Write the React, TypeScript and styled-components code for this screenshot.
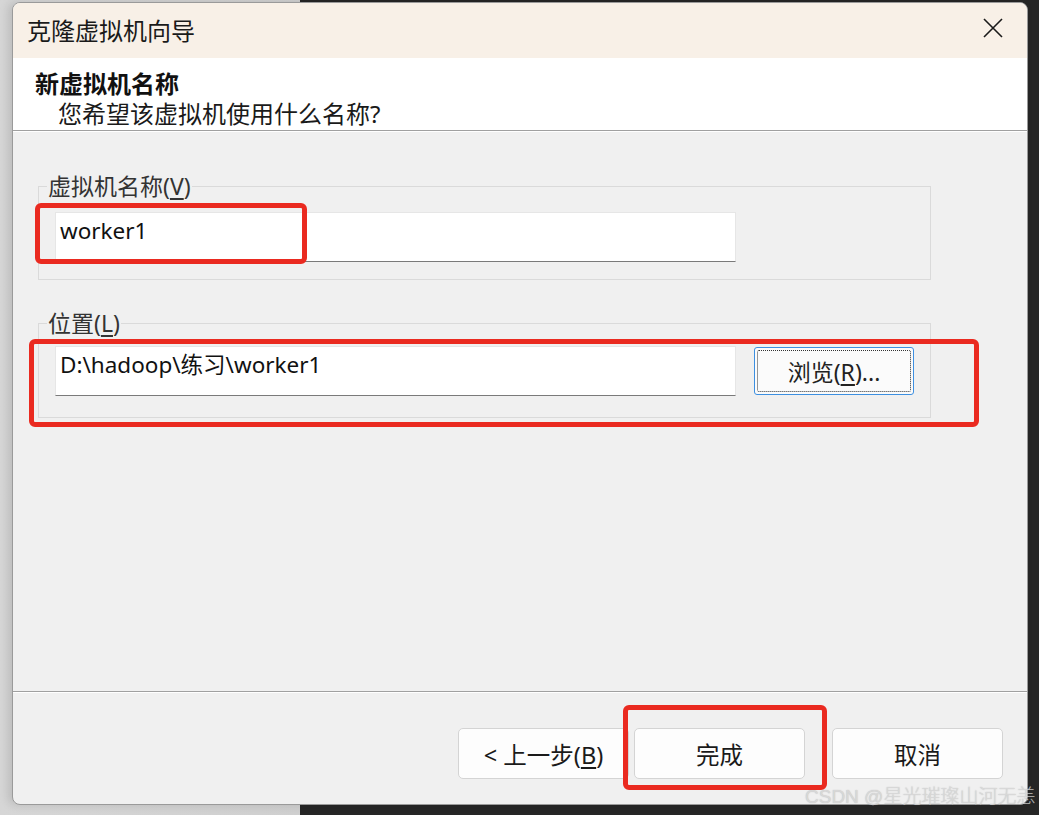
import React from "react";
import styled, { createGlobalStyle } from "styled-components";

const GlobalStyle = createGlobalStyle`
  html, body {
    margin: 0;
    padding: 0;
  }
  body {
    font-family: "Noto Sans", "Noto Sans CJK SC", sans-serif;
    color: #1a1a1a;
  }
`;

const Screen = styled.div`
  position: relative;
  width: 1039px;
  height: 815px;
  box-sizing: border-box;
  padding: 2px 0 0 12px;
  overflow: hidden;
  background: linear-gradient(to right, #d6d6d6 0, #cfcfcf 300px, #262626 300px);
`;

const Window = styled.div`
  width: 1016px;
  height: 803px;
  box-sizing: border-box;
  border: 1px solid #9a9a9a;
  border-radius: 8px;
  overflow: hidden;
  display: flex;
  flex-direction: column;
  background: #f0f0f0;
  box-shadow: -4px 0 10px rgba(0, 0, 0, 0.12);
`;

const TitleBar = styled.div`
  height: 55px;
  flex-shrink: 0;
  display: flex;
  align-items: center;
  justify-content: space-between;
  padding: 0 22px 2px 14px;
  box-sizing: border-box;
  background: #f8f0e7;
`;

const Title = styled.span`
  font-size: 24px;
  color: #1a1a1a;
`;

const CloseButton = styled.button`
  width: 24px;
  height: 24px;
  padding: 0;
  border: none;
  background: transparent;
  display: flex;
  align-items: center;
  justify-content: center;
  margin-top: -3px;
`;

const Header = styled.div`
  height: 73px;
  flex-shrink: 0;
  box-sizing: border-box;
  background: #fff;
  border-bottom: 1px solid #a0a0a0;
  padding: 11px 0 0 22px;
`;

const HeaderTitle = styled.div`
  font-size: 24px;
  line-height: 30px;
  font-weight: 700;
  color: #111;
`;

const HeaderSub = styled.div`
  font-size: 24px;
  line-height: 30px;
  padding-left: 23px;
  color: #1a1a1a;
`;

const Body = styled.div`
  flex: 1;
  border-top: 1px solid #fff;
  padding: 40px 96px 0 25px;
`;

const Group = styled.fieldset<{ $top?: number; $padTop: number; $padBottom: number }>`
  margin: ${(p) => p.$top ?? 0}px 0 0 0;
  padding: ${(p) => p.$padTop}px 0 ${(p) => p.$padBottom}px 8px;
  border: 1px solid #dadada;
  min-width: 0;
`;

const Legend = styled.legend`
  padding: 0 1px;
  font-size: 23px;
  line-height: 28px;
  color: #333;
`;

const Mnemonic = styled.u`
  text-decoration: underline;
  text-underline-offset: 3px;
`;

const FieldRow = styled.div`
  display: flex;
  align-items: center;
  gap: 18px;
  margin-left: 8px;
`;

const TextBox = styled.div`
  width: 681px;
  height: 50px;
  box-sizing: border-box;
  background: #fff;
  border: 1px solid #e6e6e6;
  border-bottom: 1px solid #7a7a7a;
  padding: 3px 0 0 4px;
  font-size: 22.5px;
  line-height: 30px;
  color: #111;
`;

const BrowseButton = styled.button`
  position: relative;
  width: 160px;
  height: 48px;
  box-sizing: border-box;
  border: 1px solid #3d8fe0;
  border-radius: 3px;
  background: #fbfbfb;
  font-family: "Noto Sans", "Noto Sans CJK SC", sans-serif;
  font-size: 23px;
  color: #222;
  padding: 0;

  &::after {
    content: "";
    position: absolute;
    inset: 2px;
    border: 1px dotted #333;
    border-radius: 2px;
  }
`;

const Footer = styled.div`
  height: 113px;
  flex-shrink: 0;
  box-sizing: border-box;
  border-top: 1px solid #a0a0a0;
  box-shadow: inset 0 1px 0 #fff;
  display: flex;
  justify-content: flex-end;
  align-items: flex-start;
  padding: 36px 24px 0 0;
`;

const WizardButton = styled.button<{ $gap?: number }>`
  width: 171px;
  height: 51px;
  margin-left: ${(p) => p.$gap ?? 0}px;
  box-sizing: border-box;
  border: 1px solid #d4d4d4;
  border-radius: 5px;
  background: #fdfdfd;
  font-family: "Noto Sans", "Noto Sans CJK SC", sans-serif;
  font-size: 23.5px;
  color: #1a1a1a;
  padding: 0;
`;

const Highlight = styled.div<{ $x: number; $y: number; $w: number; $h: number }>`
  position: absolute;
  left: ${(p) => p.$x}px;
  top: ${(p) => p.$y}px;
  width: ${(p) => p.$w}px;
  height: ${(p) => p.$h}px;
  box-sizing: border-box;
  border: 5px solid #ea2a20;
  border-radius: 6px;
  pointer-events: none;
`;

const Watermark = styled.div`
  position: absolute;
  left: 805px;
  top: 785px;
  font-family: "Liberation Sans", "Noto Sans CJK SC", sans-serif;
  font-size: 19px;
  font-weight: 300;
  line-height: 24px;
  color: rgba(225, 225, 225, 0.75);
  text-shadow: 0 0 1px rgba(120, 120, 120, 0.5);
  white-space: nowrap;
`;

export default function App() {
  return (
    <>
      <GlobalStyle />
      <Screen>
        <Window>
          <TitleBar>
            <Title>克隆虚拟机向导</Title>
            <CloseButton aria-label="关闭">
              <svg width="20" height="20" viewBox="0 0 20 20">
                <path d="M1 1 L19 19 M19 1 L1 19" stroke="#1a1a1a" strokeWidth="1.6" fill="none" />
              </svg>
            </CloseButton>
          </TitleBar>
          <Header>
            <HeaderTitle>新虚拟机名称</HeaderTitle>
            <HeaderSub>您希望该虚拟机使用什么名称?</HeaderSub>
          </Header>
          <Body>
            <Group $padTop={12} $padBottom={17}>
              <Legend>
                虚拟机名称(<Mnemonic>V</Mnemonic>)
              </Legend>
              <FieldRow>
                <TextBox>worker1</TextBox>
              </FieldRow>
            </Group>
            <Group $top={29} $padTop={9} $padBottom={21}>
              <Legend>
                位置(<Mnemonic>L</Mnemonic>)
              </Legend>
              <FieldRow>
                <TextBox>D:\hadoop\练习\worker1</TextBox>
                <BrowseButton>
                  浏览(<Mnemonic>R</Mnemonic>)...
                </BrowseButton>
              </FieldRow>
            </Group>
          </Body>
          <Footer>
            <WizardButton>
              &lt; 上一步(<Mnemonic>B</Mnemonic>)
            </WizardButton>
            <WizardButton $gap={5}>完成</WizardButton>
            <WizardButton $gap={27}>取消</WizardButton>
          </Footer>
        </Window>
        <Highlight $x={35} $y={203} $w={272} $h={61} />
        <Highlight $x={29} $y={339} $w={950} $h={88} />
        <Highlight $x={623} $y={705} $w={204} $h={85} />
        <Watermark>CSDN @星光璀璨山河无恙</Watermark>
      </Screen>
    </>
  );
}
